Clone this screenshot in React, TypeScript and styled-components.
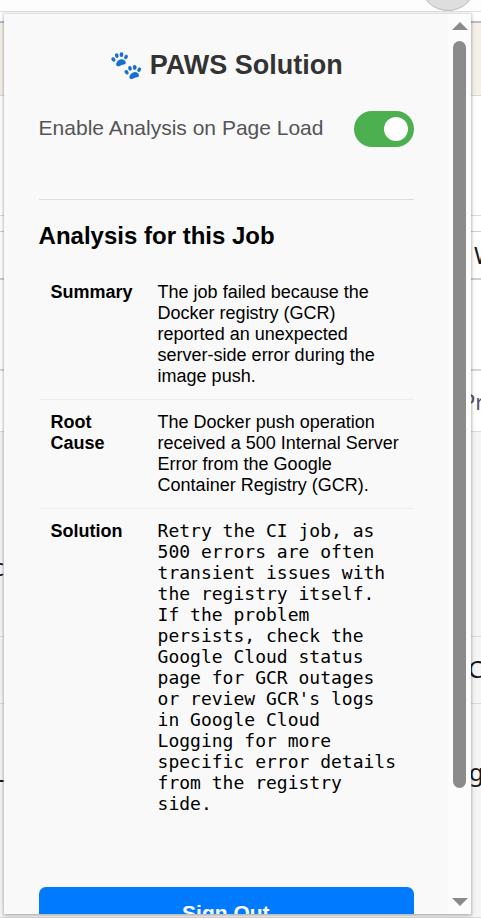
import React from 'react';
import styled, { createGlobalStyle } from 'styled-components';

const GlobalStyle = createGlobalStyle`
  * { box-sizing: border-box; }
  html, body { margin: 0; overflow: hidden; }
  body { font-family: "Liberation Sans", Arial, sans-serif; color: #000; }
`;

const Screen = styled.div`
  position: relative;
  width: 481px;
  height: 918px;
  overflow: hidden;
  background: #fff;
`;

const Band = styled.div<{ $h: number; $bg?: string; $line?: string; $thick?: number }>`
  display: flex;
  justify-content: space-between;
  height: ${p => p.$h}px;
  overflow: hidden;
  background: ${p => p.$bg ?? '#fff'};
  border-bottom: ${p => p.$thick ?? 1}px solid ${p => p.$line ?? '#dcdcde'};
`;

const Toolbar = styled(Band)`
  justify-content: flex-end;
  align-items: flex-end;
  padding-right: 5px;
`;

const Avatar = styled.div`
  flex: none;
  width: 56px;
  height: 56px;
  border-radius: 50%;
  background: #dedede;
  border: 1px solid #b8b8b8;
`;

const Fragment = styled.span<{ $side: 'left' | 'right'; $top: number; $w: number; $size?: number; $color?: string }>`
  display: flex;
  justify-content: ${p => (p.$side === 'left' ? 'flex-end' : 'flex-start')};
  margin-top: ${p => p.$top}px;
  margin-left: ${p => (p.$side === 'left' ? 0 : 'auto')};
  width: ${p => p.$w}px;
  white-space: nowrap;
  font: ${p => p.$size ?? 24}px/28px "Noto Sans", sans-serif;
  color: ${p => p.$color ?? '#18171d'};
`;

const Popup = styled.main`
  position: absolute;
  left: 4px;
  top: 14px;
  display: flex;
  width: 467px;
  height: 900px;
  overflow: hidden;
  background: #f9f9f9;
`;

const PopupShadow = styled.div`
  position: absolute;
  left: 4px;
  top: 14px;
  width: 467px;
  height: 900px;
  box-shadow: 0 0 0 1.5px rgba(0, 0, 0, 0.08), 0 2px 5px rgba(0, 0, 0, 0.22);
`;

const Content = styled.div`
  display: flex;
  flex-direction: column;
  flex: none;
  width: 444px;
  padding: 35px 34px 0 34.6px;
`;

const Title = styled.h1`
  display: flex;
  align-items: center;
  justify-content: center;
  gap: 8px;
  margin: 0;
  height: 32px;
  font-size: 27px;
  line-height: 32px;
  color: #333;
`;

const PawIcon = styled.svg`
  width: 32px;
  height: 30px;
  fill: #176fd0;
`;

const SettingRow = styled.div`
  display: flex;
  align-items: center;
  justify-content: space-between;
  height: 36px;
  margin-top: 30px;
  font-size: 21px;
  color: #555;
`;

const SettingLabel = styled.span`
  padding-bottom: 2px;
`;

const Switch = styled.button`
  display: flex;
  align-items: center;
  justify-content: flex-end;
  width: 60px;
  height: 36px;
  padding: 0 6px;
  border: 0;
  border-radius: 18px;
  background: #4caf50;
`;

const Knob = styled.span`
  width: 24px;
  height: 24px;
  border-radius: 50%;
  background: #fff;
`;

const Analysis = styled.section`
  margin-top: 52px;
  border-top: 1px solid #ddd;
`;

const Heading = styled.h2`
  margin: 22px 0 20px;
  font-size: 24px;
  line-height: 28px;
`;

const Entry = styled.div`
  display: grid;
  grid-template-columns: 107px 1fr;
  padding: 12px;
  border-bottom: 1px solid #eee;
  font-size: 18px;
  line-height: 21px;

  &:last-child { border-bottom: 0; }
`;

const Label = styled.div`
  padding-right: 24px;
  font-weight: bold;
`;

const Value = styled.div<{ $mono?: boolean }>`
  white-space: pre;
  margin: ${p => (p.$mono ? '-1px 0 1px' : '0')};
  font-family: ${p => (p.$mono ? '"DejaVu Sans Mono", monospace' : 'inherit')};
`;

const SignOut = styled.button`
  flex: none;
  height: 54px;
  margin-top: 60px;
  padding: 0 1px 2px 0;
  border: 0;
  border-radius: 7px;
  background: #007bff;
  color: #fff;
  font: bold 21px/24px "Liberation Sans", Arial, sans-serif;
`;

const Scrollbar = styled.div`
  display: flex;
  flex: none;
  flex-direction: column;
  align-items: center;
  width: 23px;
  padding: 8px 0 8px;
  background: #fcfcfc;
`;

const Arrow = styled.svg`
  flex: none;
  width: 16px;
  height: 8px;
  fill: #8b8b8b;
`;

const Track = styled.div`
  flex: 1;
  padding-top: 11px;
`;

const Thumb = styled.div`
  width: 13px;
  height: 747px;
  border-radius: 7px;
  background: #8b8b8b;
`;

const entries = [
  {
    label: 'Summary',
    text: 'The job failed because the\nDocker registry (GCR)\nreported an unexpected\nserver-side error during the\nimage push.',
  },
  {
    label: 'Root Cause',
    text: 'The Docker push operation\nreceived a 500 Internal Server\nError from the Google\nContainer Registry (GCR).',
  },
  {
    label: 'Solution',
    mono: true,
    text: "Retry the CI job, as\n500 errors are often\ntransient issues with\nthe registry itself.\nIf the problem\npersists, check the\nGoogle Cloud status\npage for GCR outages\nor review GCR's logs\nin Google Cloud\nLogging for more\nspecific error details\nfrom the registry\nside.",
  },
];

const Paws = () => (
  <PawIcon viewBox="0 0 32 30" aria-label="paw prints">
    <g id="paw" transform="translate(0 1.6) scale(1 .9)">
      <ellipse cx="3.4" cy="8.8" rx="1.9" ry="2.6" transform="rotate(-28 3.4 8.8)" />
      <ellipse cx="6.8" cy="4.5" rx="1.8" ry="2.7" transform="rotate(-12 6.8 4.5)" />
      <ellipse cx="11.5" cy="3.4" rx="1.9" ry="2.7" />
      <ellipse cx="16" cy="6" rx="1.8" ry="2.6" transform="rotate(20 16 6)" />
      <path d="M6.2 14.600C6.200 12 8 9 11 8.600c2.700-.300 4.600 1.500 4.800 3.400.200 2-1.500 2.100-3.300 2.500-2 .500-3.200 2-4.700 1.800-1-.100-1.600-.800-1.600-1.700Z" />
    </g>
    <use href="#paw" x="13.2" y="12.8" />
  </PawIcon>
);

export default function App() {
  return (
    <>
      <GlobalStyle />
      <Screen>
        <Toolbar $h={12} $bg="#fdfdfd" $line="#dedede"><Avatar /></Toolbar>
        <Band $h={11} $line="#b9bbc7" $thick={2} />
        <Band $h={73} $bg="#f5f1e9" $line="#dcd9d4" />
        <Band $h={120} />
        <Band $h={16} $line="#cfcfd2" />
        <Band $h={48} $line="#cfcfd2" $thick={2}>
          <Fragment $side="right" $top={9} $w={7}>W</Fragment>
        </Band>
        <Band $h={91} $line="#d2d8de" $thick={2} />
        <Band $h={61}>
          <Fragment $side="right" $top={16} $w={19} $size={22} $color="#4f5663">Pr</Fragment>
        </Band>
        <Band $h={205} $bg="#f5f5f5">
          <Fragment $side="left" $top={121} $w={4}>c</Fragment>
        </Band>
        <Band $h={67} $bg="#f5f5f5">
          <Fragment $side="right" $top={18} $w={13}>C</Fragment>
        </Band>
        <Band $h={214} $bg="#f5f5f5">
          <Fragment $side="left" $top={55} $w={4}>L</Fragment>
          <Fragment $side="right" $top={54} $w={12}>g</Fragment>
        </Band>
        <PopupShadow />
        <Popup>
          <Content>
            <Title><Paws />PAWS Solution</Title>
            <SettingRow>
              <SettingLabel>Enable Analysis on Page Load</SettingLabel>
              <Switch role="switch" aria-checked="true"><Knob /></Switch>
            </SettingRow>
            <Analysis>
              <Heading>Analysis for this Job</Heading>
              {entries.map(e => (
                <Entry key={e.label}>
                  <Label>{e.label}</Label>
                  <Value $mono={e.mono}>{e.text}</Value>
                </Entry>
              ))}
            </Analysis>
            <SignOut>Sign Out</SignOut>
          </Content>
          <Scrollbar>
            <Arrow viewBox="0 0 16 8"><path d="M0 8 8 0l8 8Z" /></Arrow>
            <Track><Thumb /></Track>
            <Arrow viewBox="0 0 16 8"><path d="M0 0h16L8 8Z" /></Arrow>
          </Scrollbar>
        </Popup>
      </Screen>
    </>
  );
}
